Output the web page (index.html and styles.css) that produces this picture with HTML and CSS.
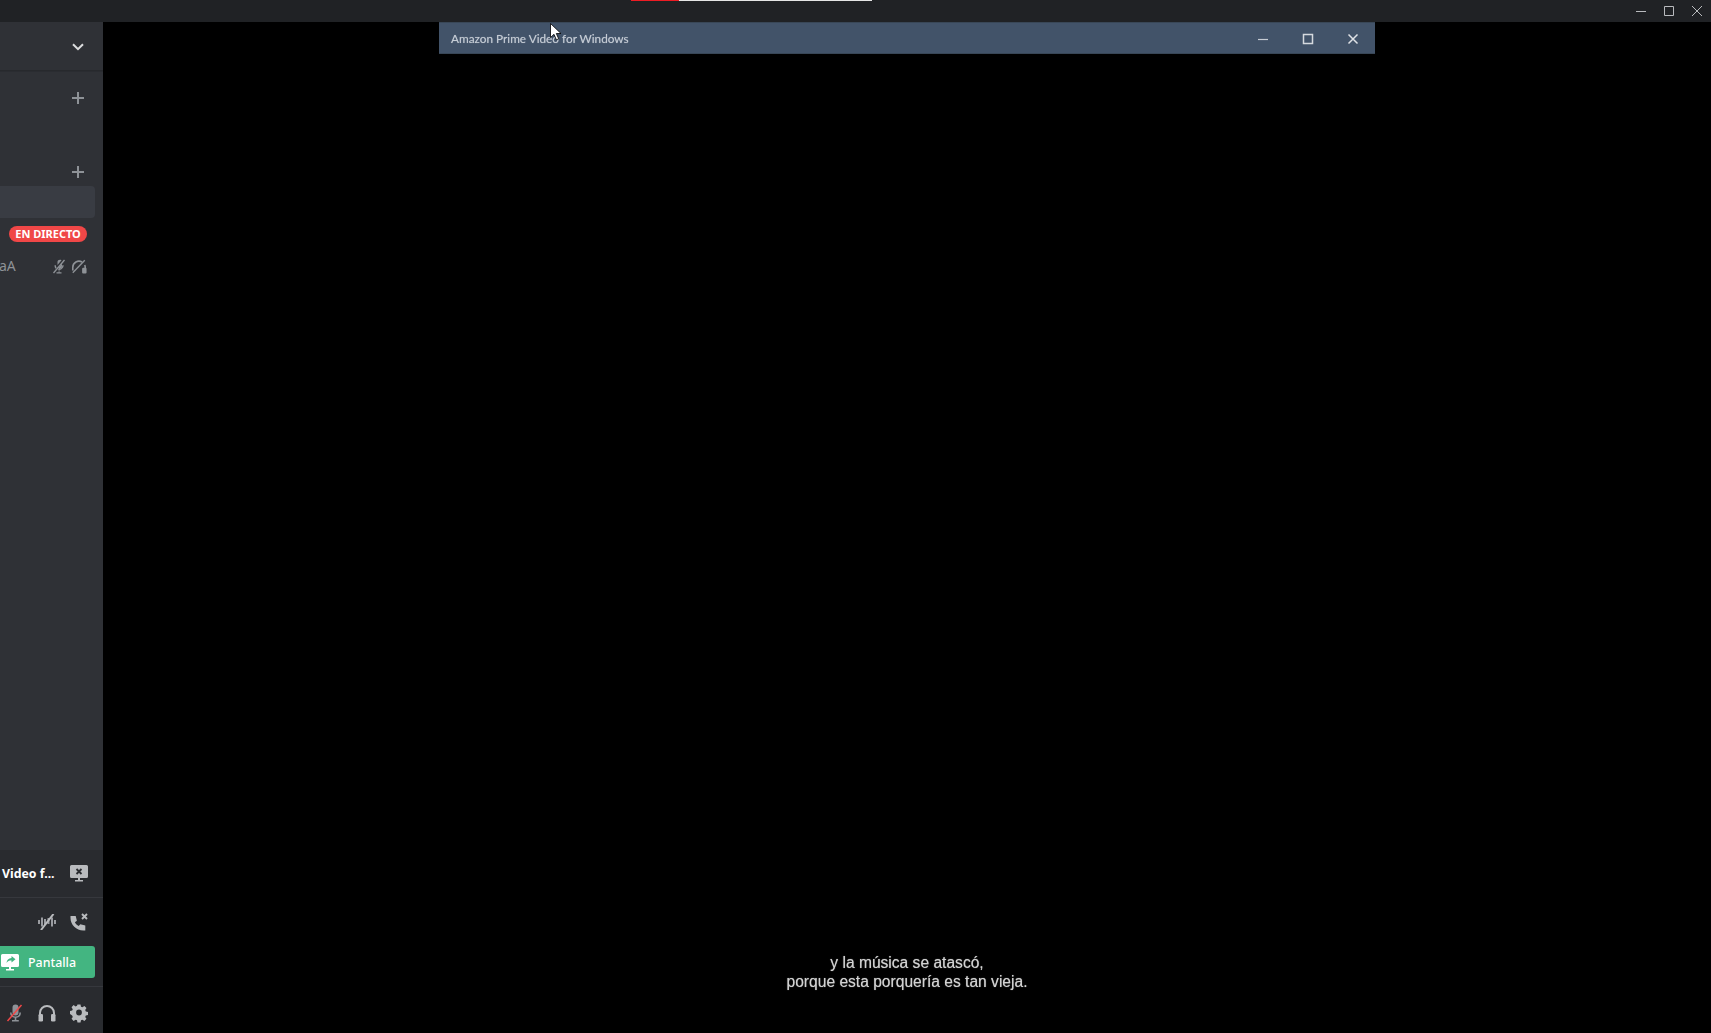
FILE: index.html
```html
<!DOCTYPE html>
<html lang="es">
<head>
<meta charset="utf-8">
<title>Discord</title>
<link rel="stylesheet" href="styles.css">
</head>
<body>
<div class="app">
  <header class="topbar">
    <div class="progress"><span class="progress-red"></span><span class="progress-white"></span></div>
    <div class="win-controls">
      <svg width="14" height="14" viewBox="0 0 14 14"><path d="M2 7.500h10" stroke="#b9bbbe" stroke-width="1"/></svg>
      <svg width="14" height="14" viewBox="0 0 14 14"><path d="M2.500 2.500h9v9h-9z" fill="none" stroke="#b9bbbe" stroke-width="1"/></svg>
      <svg width="14" height="14" viewBox="0 0 14 14"><path d="M2 2l10 10M12 2L2 12" stroke="#b9bbbe" stroke-width="1"/></svg>
    </div>
  </header>
  <div class="main">
    <aside class="sidebar">
      <div class="server-head">
        <svg width="14" height="10" viewBox="0 0 14 10"><path d="M2 2.200l5 5 5-5" fill="none" stroke="#dcddde" stroke-width="2"/></svg>
      </div>
      <div class="channels">
        <div class="cat cat-one"><svg class="plus" width="14" height="14" viewBox="0 0 14 14"><path d="M7 1v12M1 7h12" stroke="#8e9297" stroke-width="2"/></svg></div>
        <div class="cat cat-two"><svg class="plus" width="14" height="14" viewBox="0 0 14 14"><path d="M7 1v12M1 7h12" stroke="#8e9297" stroke-width="2"/></svg></div>
        <div class="selected"></div>
        <div class="user-row user-live"><span class="live">EN DIRECTO</span></div>
        <div class="user-row user-name">
          <span class="uname">aA</span>
          <span class="state-icons">
            <svg width="14" height="15" viewBox="0 0 14 15"><path d="M9.500 1.200C8 .2 5.500.8 5.500 3v3zM6 9l4-4.200V7c0 2.200-2.300 3.600-4 2zM2.500 6.300c0 1.400.4 2.600 1.100 3.400l1-1c-.5-.7-.7-1.500-.7-2.400zM11.700 6.300h-1.400c0 2-1.500 3.500-3.500 3.500l-1 1.100c.3.100.6.200.9.200v2.200H4.500V14.500h5v-1.200H7.400v-2.200c2.500-.5 4.300-2.400 4.300-4.800z" fill="#8e9297"/><path d="M12.500 1L1.500 14" stroke="#8e9297" stroke-width="1.300"/></svg>
            <svg width="16" height="15" viewBox="0 0 18 16"><path d="M2 12.500V9a7 7 0 0 1 10.500-6.100M15.500 6.200c.3.900.5 1.800.5 2.800v3" fill="none" stroke="#8e9297" stroke-width="1.800"/><rect x="12.500" y="9.500" width="5" height="6.500" rx="1.200" fill="#8e9297"/><path d="M2 15L15.500 1" stroke="#8e9297" stroke-width="1.500"/></svg>
          </span>
        </div>
      </div>
      <div class="panel">
        <div class="panel-stream">
          <span class="stream-name">Video f...</span>
          <svg width="18" height="17" viewBox="0 0 18 17"><path d="M1.500 0h15A1.500 1.500 0 0 1 18 1.500v10a1.500 1.500 0 0 1-1.500 1.500h-15A1.500 1.500 0 0 1 0 11.500v-10A1.500 1.500 0 0 1 1.500 0zM8 13h2v2h3v1.500H5V15h3z" fill="#b9bbbe"/><path d="M6.500 4l5 5M11.500 4l-5 5" stroke="#292b2f" stroke-width="1.800"/></svg>
        </div>
        <div class="panel-voice">
          <div class="voice-icons">
            <svg width="18" height="16" viewBox="0 0 18 16"><g stroke="#9a9ca1" stroke-width="2"><path d="M1 6v4M4 3.500v9M7 5v6M10.500 4v6M14 3.500v9M17 6v4"/></g><path d="M15.500 0L3 16" stroke="#b9bbbe" stroke-width="2"/></svg>
            <svg width="19" height="18" viewBox="0 0 19 18"><path d="M.5 3h5.200l1.200 4.800-2 1.500c.8 1.600 2.200 3 3.800 3.800l1.600-1.900 5 1.200V17.500h-2C6.300 17.500.5 11.700.5 5z" fill="#b9bbbe"/><path d="M12 1l5 5M17 1l-5 5" stroke="#b9bbbe" stroke-width="1.900"/></svg>
          </div>
          <div class="share-btn">
            <svg class="share-icon" width="18" height="17" viewBox="0 0 18 17"><path d="M1.500 0h15A1.500 1.500 0 0 1 18 1.500v10a1.500 1.500 0 0 1-1.500 1.500h-15A1.500 1.500 0 0 1 0 11.500v-10A1.500 1.500 0 0 1 1.500 0zM8 13h2v2h3v1.500H5V15h3z" fill="#fff"/><path d="M10.500 2l4 3.300-4 3.300V6.500c-2.300 0-3.800.6-5 2.500.3-2.800 2-4.800 5-5z" fill="#43b581"/></svg>
            <span>Pantalla</span>
          </div>
        </div>
        <div class="panel-user">
          <svg width="20" height="20" viewBox="0 0 20 20"><path d="M10.500 1.500a3 3 0 0 0-3 3v5a3 3 0 0 0 6 0v-5a3 3 0 0 0-3-3zM5 9.500h1.600a3.900 3.900 0 0 0 7.800 0H16a5.500 5.500 0 0 1-4.700 5.300V17h2.500v1.500H7V17h2.700v-2.200A5.500 5.500 0 0 1 5 9.500z" fill="#8e9297"/><path d="M16.500 2L2.500 18" stroke="#f04747" stroke-width="1.500"/></svg>
          <svg width="20" height="20" viewBox="0 0 20 20"><path d="M3 12v-2a7 7 0 0 1 14 0v2" fill="none" stroke="#b9bbbe" stroke-width="2"/><rect x="1.500" y="11" width="4.500" height="7.500" rx="1.300" fill="#b9bbbe"/><rect x="14" y="11" width="4.500" height="7.500" rx="1.300" fill="#b9bbbe"/></svg>
          <svg width="20" height="20" viewBox="0 0 20 20"><path fill="#b9bbbe" fill-rule="evenodd" d="M8.300 1h3.400l.5 2.500 1.600.7 2.200-1.400 2.300 2.300-1.400 2.200.7 1.600 2.400.5v3.300l-2.400.5-.7 1.700 1.400 2.100-2.300 2.400-2.200-1.400-1.600.7-.5 2.300H8.300l-.5-2.300-1.600-.7-2.200 1.400-2.300-2.400 1.400-2.100-.7-1.700L0 11.700V8.400l2.400-.5.700-1.600-1.400-2.200L4 1.800l2.200 1.400 1.600-.7zM10 6.800a3.200 3.200 0 1 0 0 6.400 3.200 3.200 0 0 0 0-6.400z" transform="translate(1 .500) scale(.9)"/></svg>
        </div>
      </div>
    </aside>
    <main class="stage">
      <div class="video-title">
        <span class="video-title-text">Amazon Prime Video for Windows</span>
        <div class="video-controls">
          <svg width="12" height="12" viewBox="0 0 12 12"><path d="M1 6.500h10" stroke="#c6ccd4" stroke-width="1.200"/></svg>
          <svg width="12" height="12" viewBox="0 0 12 12"><path d="M1.500 1.500h9v9h-9z" fill="none" stroke="#d5d9de" stroke-width="1.500"/></svg>
          <svg width="12" height="12" viewBox="0 0 12 12"><path d="M1.500 1.500l9 9M10.500 1.500l-9 9" stroke="#dfe2e6" stroke-width="1.500"/></svg>
        </div>
      </div>
      <div class="subtitles">y la música se atascó,<br>porque esta porquería es tan vieja.</div>
    </main>
  </div>
  <svg class="cursor" width="12" height="18" viewBox="0 0 12 18"><path d="M.5.500v14l3.500-3.200 2.400 5.500 2.300-1-2.400-5.300h4.700z" fill="#fff" stroke="#000" stroke-width=".8"/></svg>
</div>
</body>
</html>
```
FILE: styles.css
```css
* { box-sizing: border-box; }
html, body { margin: 0; height: 100%; background: #000; overflow: hidden; }
body { font-family: "Noto Sans", "Open Sans", sans-serif; }
.app { position: relative; width: 1711px; height: 1033px; display: flex; flex-direction: column; }

.topbar { position: relative; flex: 0 0 22px; background: #202225; display: flex; justify-content: flex-end; }
.progress { position: absolute; left: 631px; top: 0; display: flex; height: 1px; }
.progress-red { width: 48px; background: #ed1c24; }
.progress-white { width: 193px; background: #e6e6e6; }
.win-controls { display: flex; align-items: center; gap: 14px; padding-right: 7px; }

.main { flex: 1; display: flex; min-height: 0; }

.sidebar { flex: 0 0 103px; display: flex; flex-direction: column; background: #2f3136; }
.server-head { flex: 0 0 49px; display: flex; justify-content: flex-end; align-items: center; padding: 1px 18px 0 0; border-bottom: 1px solid #27292d; box-shadow: 0 1px 0 rgba(4,4,5,.1); }
.channels { flex: 1; display: flex; flex-direction: column; }
.cat { display: flex; justify-content: flex-end; padding-right: 18px; }
.cat-one { padding-top: 20px; }
.cat-two { padding-top: 60px; }
.selected { height: 32px; margin: 7px 8px 0 0; background: #393c43; border-radius: 0 4px 4px 0; }
.user-row { display: flex; align-items: center; }
.user-live { justify-content: flex-end; height: 16px; margin-top: 8px; padding-right: 16px; }
.live { width: 78px; height: 16px; border-radius: 8px; background: #f04747; color: #fff; font: 700 11px/16px "Noto Sans", sans-serif; text-align: center; white-space: nowrap; }
.user-name { justify-content: space-between; margin-top: 15px; height: 18px; padding-right: 16px; }
.uname { color: #8e9297; font-size: 14px; line-height: 18px; margin-left: -1px; }
.state-icons { display: flex; align-items: center; gap: 5px; }

.panel { flex: 0 0 auto; background: #292b2f; }
.panel-stream { height: 48px; display: flex; justify-content: space-between; align-items: center; padding: 0 15px 0 2px; border-bottom: 1px solid #36383d; }
.stream-name { color: #fff; font-size: 12.300px; font-weight: 700; line-height: 18px; white-space: nowrap; }
.panel-voice { height: 89px; border-bottom: 1px solid #36383d; padding-top: 15px; }
.voice-icons { display: flex; justify-content: flex-end; align-items: center; gap: 14px; height: 18px; padding-right: 14px; }
.share-btn { display: flex; align-items: center; width: 95px; height: 32px; margin-top: 15px; padding-left: 1px; background: #43b581; border-radius: 0 3px 3px 0; color: #fff; font-size: 12.400px; font-weight: 500; }
.share-icon { margin-right: 9px; }
.panel-user { height: 46px; display: flex; justify-content: flex-end; align-items: center; gap: 12px; padding: 5px 14px 0 0; }

.stage { flex: 1; background: #000; display: flex; flex-direction: column; align-items: center; justify-content: space-between; }
.video-title { width: 936px; height: 32px; flex: none; display: flex; align-items: center; justify-content: space-between; background: #425369; border-top: 1px solid #394757; border-bottom: 1px solid #394757; padding: 1px 16px 0 12px; }
.video-title-text { color: #c5ccd5; font: 11.800px/16px "Lato", sans-serif; filter: blur(.4px); text-shadow: 0 0 1px rgba(197,204,213,.6); }
.video-controls { display: flex; align-items: center; gap: 33px; filter: blur(.3px); }
.subtitles { margin-bottom: 42px; color: #d2d2d2; font: 15.600px/19px "Liberation Sans", sans-serif; text-align: center; filter: blur(.5px); text-shadow: 0 0 1px rgba(210,210,210,.7); }

.cursor { position: absolute; left: 550px; top: 23px; }
```
